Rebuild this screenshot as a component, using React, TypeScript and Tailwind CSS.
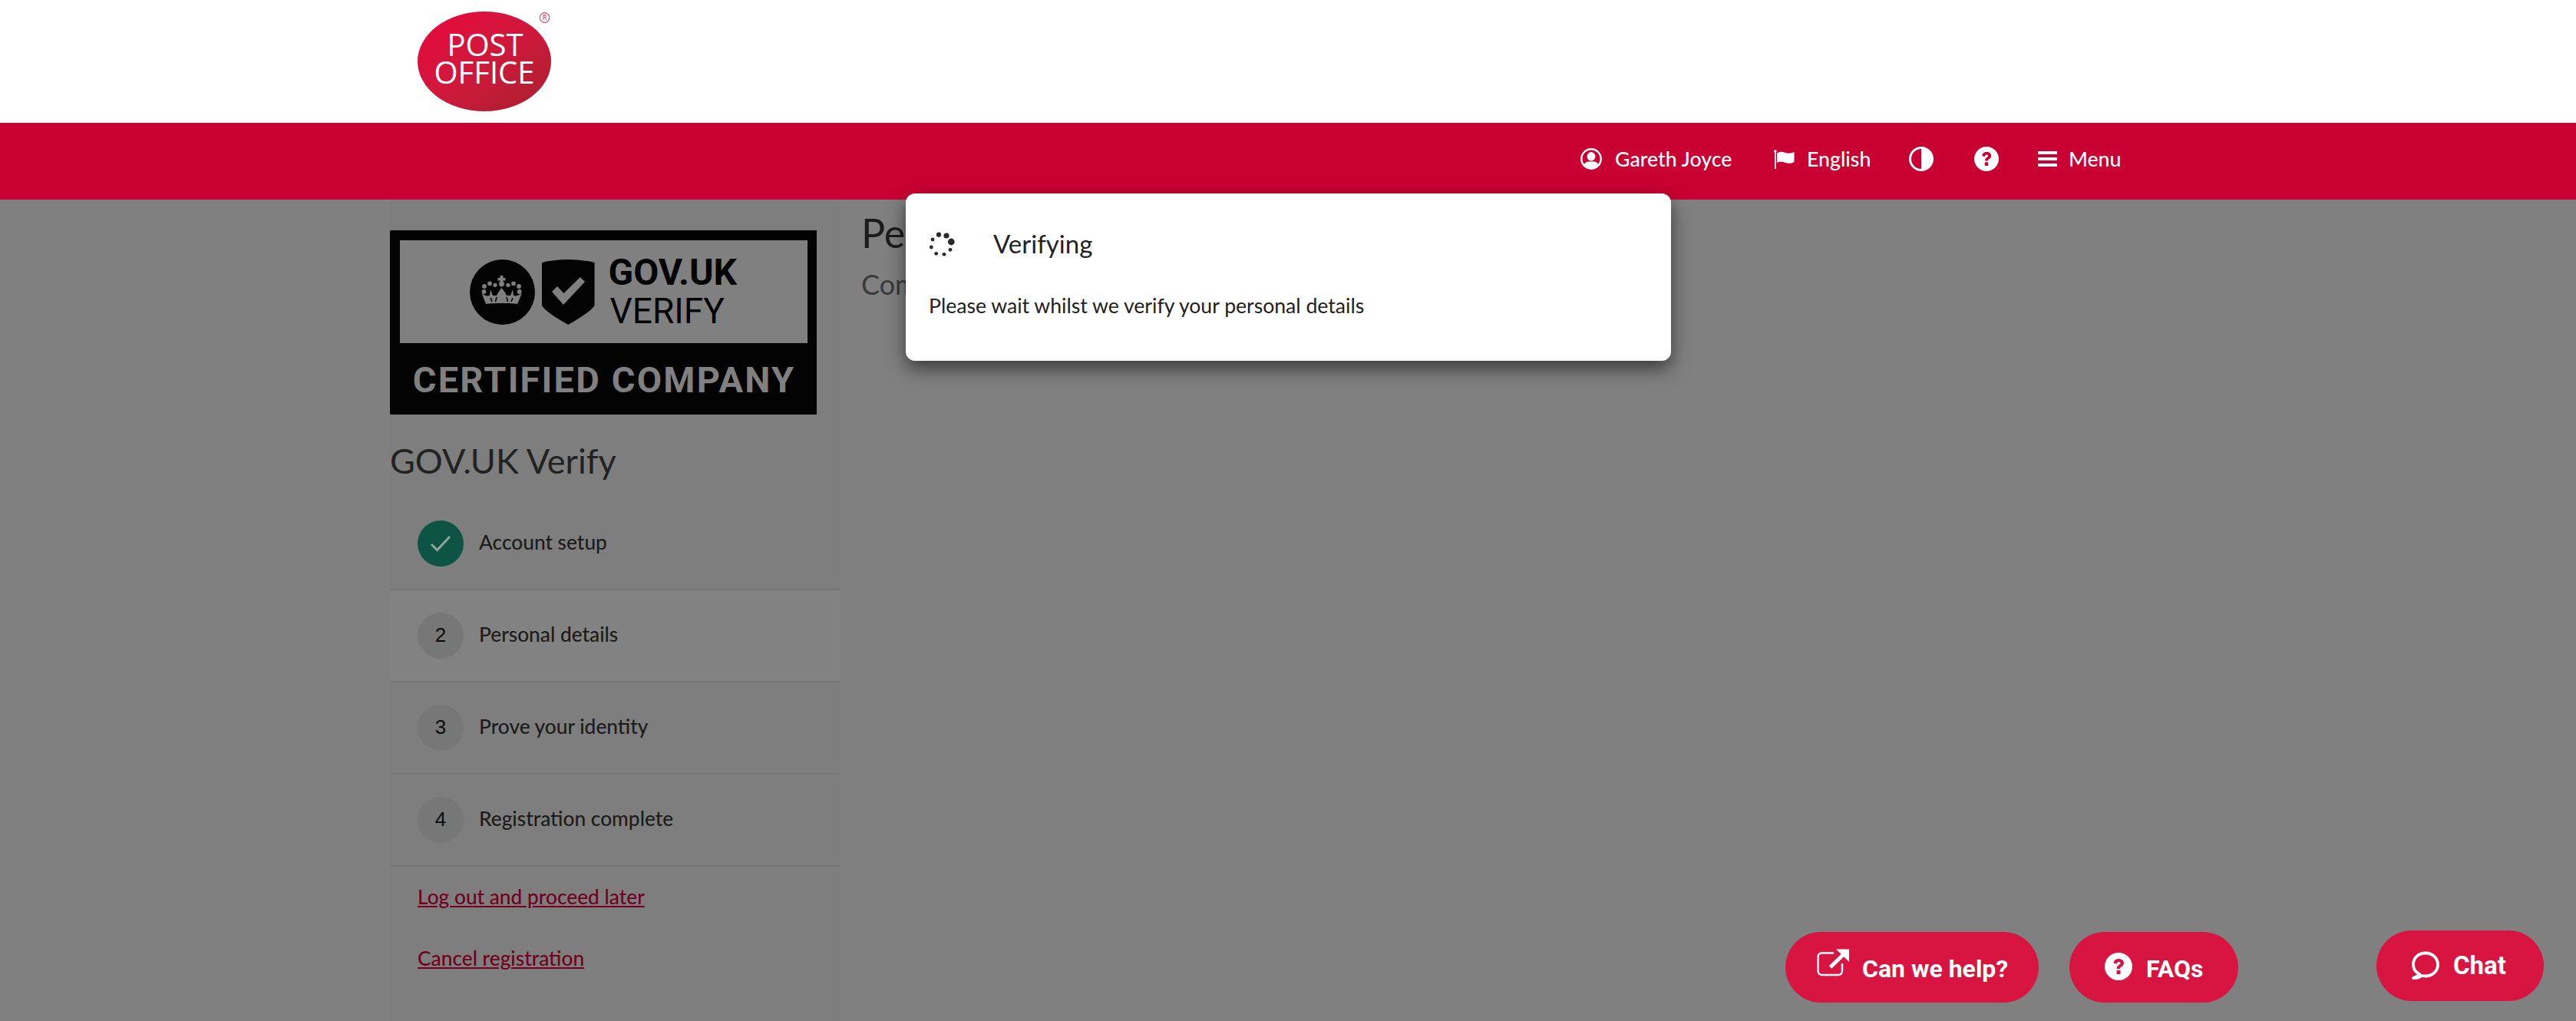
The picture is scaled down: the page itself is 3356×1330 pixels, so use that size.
import React from "react";

const lato = "font-['Lato','Liberation_Sans',sans-serif]";

function UserIcon() {
  return (
    <svg width="28" height="28" viewBox="0 0 28 28" className="shrink-0">
      <defs>
        <clipPath id="uclip"><circle cx="14" cy="14" r="12.5" /></clipPath>
      </defs>
      <circle cx="14" cy="14" r="12.7" fill="none" stroke="#fff" strokeWidth="2.4" />
      <g clipPath="url(#uclip)" fill="#fff">
        <ellipse cx="14" cy="10.8" rx="5.4" ry="5.8" />
        <path d="M3 28 C3 20 8 17.5 10.5 17.5 H17.5 C20 17.5 25 20 25 28 Z" />
      </g>
    </svg>
  );
}

function FlagIcon() {
  return (
    <svg width="27" height="25" viewBox="0 0 27 25" className="shrink-0">
      <rect x="1" y="2" width="1.6" height="23" fill="#fff" />
      <circle cx="1.8" cy="2" r="1.8" fill="#fff" />
      <path d="M4 4.5 C9 1.5 12 3 15 4 C19 5.3 23 4.5 26.5 3 V16 C23 18 19 18.3 15 17 C12 16 8 15 4 17 Z" fill="#fff" />
    </svg>
  );
}

function ContrastIcon() {
  return (
    <svg width="32" height="32" viewBox="0 0 32 32" className="shrink-0">
      <circle cx="16" cy="16" r="14.5" fill="none" stroke="#fff" strokeWidth="3" />
      <path d="M16 1 A15 15 0 0 1 16 31 Z" fill="#fff" />
    </svg>
  );
}

function QuestionIcon({ size = 32, fg = "#c90032" }: { size?: number; fg?: string }) {
  return (
    <svg width={size} height={size} viewBox="0 0 32 32" className="shrink-0">
      <circle cx="16" cy="16" r="16" fill="#fff" />
      <path d="M10.3 12.2 C10.6 8.8 13 7 16.2 7 C19.5 7 22.2 9 22.2 12 C22.2 14.4 20.7 15.5 19 16.5 C18 17.1 18 17.6 18 18.6 H14 C14 16.4 14.6 15.2 16.4 14.2 C17.6 13.5 18.2 13 18.2 12.1 C18.2 11.2 17.3 10.6 16.2 10.6 C15 10.6 14.2 11.3 13.9 12.9 Z" fill={fg} />
      <rect x="13.8" y="20.3" width="4.4" height="4.6" fill={fg} />
    </svg>
  );
}

function MenuIcon() {
  return (
    <svg width="25" height="20" viewBox="0 0 25 20" className="shrink-0">
      <rect width="25" height="4" fill="#fff" />
      <rect y="8" width="25" height="4" fill="#fff" />
      <rect y="16" width="25" height="4" fill="#fff" />
    </svg>
  );
}

function ExternalIcon() {
  return (
    <svg width="42" height="36" viewBox="0 0 42 36" className="shrink-0">
      <path d="M22 5.5 H6 A5 5 0 0 0 1.5 10.5 V29 A5 5 0 0 0 6.5 34 H28 A5 5 0 0 0 33 29 V19" fill="none" stroke="#fff" strokeWidth="2.4" />
      <path d="M17.5 24 L36 6" stroke="#fff" strokeWidth="5" fill="none" />
      <path d="M25 0.5 H42 V17 Z" fill="#fff" />
    </svg>
  );
}

function ChatIcon() {
  return (
    <svg width="36" height="38" viewBox="0 0 36 38" className="shrink-0">
      <path d="M10 30 C4 27 2 22 2 17.5 C2 8.5 9 2.5 18 2.5 C27 2.5 34 9 34 17.5 C34 26 27 32.5 18 32.5 C16 32.5 14.5 32.3 13 31.8 C10.5 33.8 6.5 35.5 2 35 C5.5 33.8 8.5 32.5 10 30 Z" fill="none" stroke="#fff" strokeWidth="3.8" strokeLinejoin="round" />
    </svg>
  );
}

function Spinner() {
  const dots: [number, number, number][] = [
    [44.3, 26, 4.4],
    [38, 18, 3.6],
    [28, 16.7, 3.1],
    [20, 23, 2.4],
    [18.3, 33, 2.4],
    [24.7, 41.3, 2.4],
    [35, 42.3, 2.4],
    [43, 36.3, 2.4],
  ];
  return (
    <svg width="70" height="60" viewBox="0 0 70 60" className="shrink-0 -mx-[15px]">
      {dots.map(([x, y, r], i) => (
        <circle key={i} cx={x} cy={y} r={r} fill="#2a2a2a" />
      ))}
    </svg>
  );
}

function GovEmblem() {
  const c = "#808080";
  const dots: [number, number, number][] = [
    [30.5, 50, 2.9], [31, 43, 2.9], [38, 39.3, 2.9], [45, 41.3, 2.6],
    [62, 41.3, 2.6], [69, 39.3, 2.9], [76, 43, 2.9], [76.7, 50, 2.9], [53.5, 40, 3.4],
  ];
  return (
    <svg width="176" height="87" viewBox="11 7 176 87" className="shrink-0">
      <circle cx="54.5" cy="50.5" r="42.5" fill="#030303" />
      {dots.map(([x, y, r], i) => (
        <circle key={i} cx={x} cy={y} r={r} fill={c} />
      ))}
      <path d="M51.5 29 H55.5 V32 H58.5 V35.5 H55.5 V39 H51.5 V35.5 H48.5 V32 H51.5 Z" fill={c} />
      <path d="M33 66 C36 64.5 70 64.5 74 66 L80 52 C76 55 72 56 69 55 L68 47 L65 55 L63 55 L61 55 L60 55 L58 51 L53.5 45 L49 51 L47 55 L44 55 L42 55 L39 47 L38 55 C35 56 31 55 27.5 52 Z" fill={c} />
      <path d="M47 57 L45.5 63 M60 57 L61.5 63 M39 58 L41 63 M68 58 L66 63" stroke="#030303" strokeWidth="1.6" />
      <path d="M106 12 Q140 4 174.5 12 V68 Q170 76 140.3 93 Q110 76 106 68 Z" fill="#030303" />
      <path d="M119 50 L126 43 L134.5 52 L156 31 L162 37 L134 67 Z" fill={c} />
    </svg>
  );
}

function Step({ n, label, done, active }: { n?: string; label: string; done?: boolean; active?: boolean }) {
  return (
    <div className={`h-[120px] flex items-center pl-[36px] border-b-2 border-[#767676] ${active ? "bg-[#828282]" : ""}`}>
      {done ? (
        <div className="w-[60px] h-[60px] rounded-full bg-[#0e5444] flex items-center justify-center shrink-0">
          <svg width="28" height="22" viewBox="0 0 28 22">
            <path d="M2 12 L9.5 19.5 L26 2" fill="none" stroke="#8fa39d" strokeWidth="3" />
          </svg>
        </div>
      ) : (
        <div className="w-[60px] h-[60px] rounded-full bg-[#777777] flex items-center justify-center shrink-0 font-['Liberation_Sans',sans-serif] text-[26px] text-[#0c0c0c] pb-[2px]">
          {n}
        </div>
      )}
      <span className={`ml-[20px] -mt-[3px] text-[26.3px] font-medium leading-none text-[#1c1c1c] ${lato}`}>{label}</span>
    </div>
  );
}

export default function App() {
  return (
    <div className={`relative w-full h-[1330px] overflow-hidden bg-[#808080] flex flex-col ${lato}`}>
      <header className="h-[160px] bg-white pl-[544px] pt-[15px] shrink-0">
        <div className="relative w-[174px] h-[130px] rounded-[50%] bg-gradient-to-br from-[#e8033d] via-[#d0183c] to-[#a81f2e] flex flex-col items-center justify-center pb-[8px] text-white font-['Open_Sans','Liberation_Sans',sans-serif]">
          <div className="text-[40px] leading-[36px] pl-[2px]">POST</div>
          <div className="text-[40px] leading-[36px]">OFFICE</div>
          <span className="absolute left-[159px] top-[1px] w-[13px] h-[14px] rounded-full border border-[#e4063d] text-[#e4063d] text-[9px] leading-[12px] text-center">R</span>
        </div>
      </header>

      <nav className="h-[100px] bg-[#c90032] shrink-0 flex items-center pl-[2059px] pb-[6px] text-white text-[26.7px] font-medium">
        <UserIcon />
        <span className="ml-[17px] w-[153px] whitespace-nowrap">Gareth Joyce</span>
        <span className="ml-[54px]"><FlagIcon /></span>
        <span className="ml-[16px] w-[81px] whitespace-nowrap">English</span>
        <span className="ml-[52px]"><ContrastIcon /></span>
        <span className="ml-[53px]"><QuestionIcon /></span>
        <span className="ml-[51px]"><MenuIcon /></span>
        <span className="ml-[15px] whitespace-nowrap">Menu</span>
      </nav>

      <main className="flex-1 flex pl-[508px] min-h-0">
        <aside className="w-[586px] bg-[#7e7e7e] shrink-0 pt-[40px]">
          <div className="w-[556px] h-[240px] bg-[#030303] flex flex-col items-center pt-[13px]">
            <div className="w-[531px] h-[134px] bg-[#808080] flex items-center pl-[90px] shrink-0">
              <GovEmblem />
              <div className="ml-[6px] text-[#030303] font-['Roboto','Liberation_Sans',sans-serif]">
                <div className="text-[48px] leading-[50px] font-bold">GOV.UK</div>
                <div className="text-[46px] leading-[50px] ml-[2px]">VERIFY</div>
              </div>
            </div>
            <div className="mt-[18px] pl-[2px] text-[47px] leading-[60px] font-bold text-[#808080] tracking-[2.2px] whitespace-nowrap font-['Roboto','Liberation_Sans',sans-serif]">
              CERTIFIED COMPANY
            </div>
          </div>
          <h2 className="mt-[30px] text-[45px] leading-[60px] font-normal text-[#222]">GOV.UK Verify</h2>
          <div className="h-[19px]" />
          <Step done label="Account setup" />
          <Step n="2" label="Personal details" active />
          <Step n="3" label="Prove your identity" />
          <Step n="4" label="Registration complete" />
          <div className={`pl-[36px] pt-[21px] text-[26.3px] font-medium leading-[36px] text-[#73001f]`}>
            <div><a className="underline">Log out and proceed later</a></div>
            <div className="mt-[44px]"><a className="underline">Cancel registration</a></div>
          </div>
        </aside>
        <section className="pl-[28px] pt-[10px]">
          <h1 className="text-[52px] leading-[66px] font-normal text-[#1c1c1c] whitespace-nowrap">Personal details</h1>
          <p className="mt-[12px] text-[36px] leading-[44px] text-[#3a3a3a] whitespace-nowrap">Complete your details</p>
        </section>
      </main>

      {/* Modal */}
      <div className="absolute left-[1180px] top-[252px] w-[997px] h-[218px] bg-white rounded-[12px] shadow-[0_10px_24px_rgba(0,0,0,0.55)] pl-[30px] pt-[37px]">
        <div className="flex items-center h-[60px]">
          <div className="w-[40px]"><Spinner /></div>
          <span className="ml-[44px] text-[33px] text-[#222] leading-none -mt-[3px]">Verifying</span>
        </div>
        <p className="mt-[32px] text-[26.6px] leading-[34px] text-[#222]">Please wait whilst we verify your personal details</p>
      </div>

      {/* Floating help buttons */}
      <div className="absolute left-[2326px] top-[1214px] flex gap-[40px] text-white font-['Roboto','Liberation_Sans',sans-serif] font-bold text-[32px]">
        <a className="w-[330px] h-[92px] rounded-[46px] bg-[#d81440] flex items-center pl-[41px]">
          <span className="-mt-[12px]"><ExternalIcon /></span>
          <span className="ml-[17px] mt-[4px] whitespace-nowrap">Can we help?</span>
        </a>
        <a className="w-[220px] h-[92px] rounded-[46px] bg-[#d81440] flex items-center pl-[46px]">
          <span className="-mt-[2px]"><QuestionIcon size={36} fg="#d81440" /></span>
          <span className="ml-[18px] mt-[4px]">FAQs</span>
        </a>
      </div>
      <a className="absolute left-[3096px] top-[1212px] w-[218px] h-[92px] rounded-[46px] bg-[#d81440] flex items-center pl-[46px] text-white font-['Roboto','Liberation_Sans',sans-serif] font-bold text-[33px]">
        <ChatIcon />
        <span className="ml-[18px]">Chat</span>
      </a>
    </div>
  );
}
